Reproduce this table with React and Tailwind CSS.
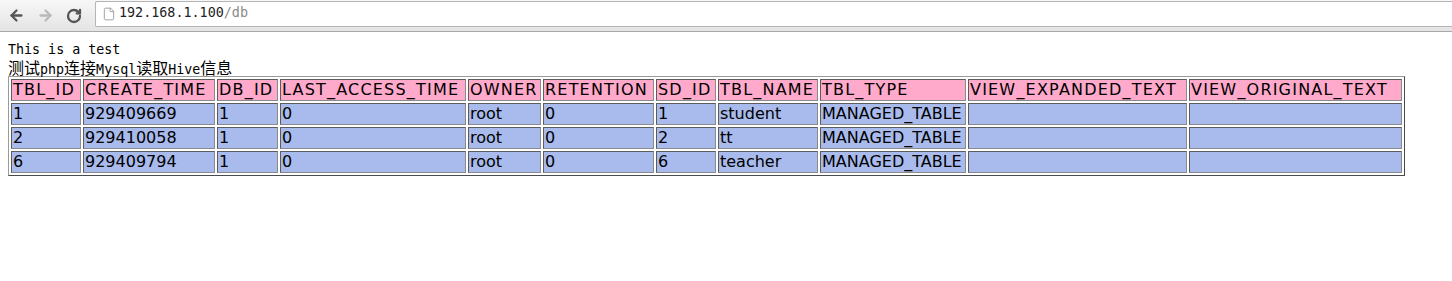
import { ArrowLeft, ArrowRight, RotateCw, File } from 'lucide-react';

const columns = [
  { name: 'TBL_ID', w: 'w-[70px]' },
  { name: 'CREATE_TIME', w: 'w-[132px]' },
  { name: 'DB_ID', w: 'w-[61px]' },
  { name: 'LAST_ACCESS_TIME', w: 'w-[186px]' },
  { name: 'OWNER', w: 'w-[73px]' },
  { name: 'RETENTION', w: 'w-[111px]' },
  { name: 'SD_ID', w: 'w-[60px]' },
  { name: 'TBL_NAME', w: 'w-[100px]' },
  { name: 'TBL_TYPE', w: 'w-[146px]' },
  { name: 'VIEW_EXPANDED_TEXT', w: 'w-[219px]' },
  { name: 'VIEW_ORIGINAL_TEXT', w: 'w-[213px]' },
];

const rows = [
  ['1', '929409669', '1', '0', 'root', '0', '1', 'student', 'MANAGED_TABLE', '', ''],
  ['2', '929410058', '1', '0', 'root', '0', '2', 'tt', 'MANAGED_TABLE', '', ''],
  ['6', '929409794', '1', '0', 'root', '0', '6', 'teacher', 'MANAGED_TABLE', '', ''],
];

const cell =
  'h-[22px] p-px border border-t-[#5c5c5c] border-l-[#5c5c5c] border-b-[#8a8a8a] border-r-[#8a8a8a] text-left font-normal whitespace-nowrap overflow-hidden leading-[18px]';

function Toolbar() {
  return (
    <div className="h-[32px] flex items-center bg-gradient-to-b from-[#f7f7f7] to-[#e4e4e4] border-b border-[#a9a9a9]">
      <div className="flex items-center gap-[12px] pl-[8px] w-[95px]">
        <ArrowLeft size={17} strokeWidth={3.2} className="text-[#555]" />
        <ArrowRight size={17} strokeWidth={3.2} className="text-[#b9b9b9]" />
        <RotateCw size={16} strokeWidth={3.4} className="text-[#555]" />
      </div>
      <div className="flex-1 h-[26px] mb-[4px] bg-white border border-[#b5b5b5] border-r-0 rounded-l-[2px] flex items-center pl-[6px] gap-[3px]">
        <File size={14} strokeWidth={1.3} className="text-[#888]" />
        <span className="font-['DejaVu_Sans_Mono',monospace] text-[13.4px] text-[#222]">
          192.168.1.100<span className="text-[#8a8a8a]">/db</span>
        </span>
      </div>
    </div>
  );
}

export default function App() {
  return (
    <div className="w-[1452px] h-[281px] bg-white overflow-hidden">
      <Toolbar />
      <div className="px-[8px] pt-[9px] text-black">
        <div className="font-['DejaVu_Sans_Mono','Liberation_Mono',monospace] text-[13.33px] leading-[17px]">
          This is a test
        </div>
        <div className="font-['DejaVu_Sans_Mono','Noto_Sans_CJK_SC',monospace] text-[13.33px] leading-[18px] h-[18px] whitespace-nowrap">
          <span className="font-['Noto_Sans_CJK_SC',sans-serif] text-[16px]">测试</span>php
          <span className="font-['Noto_Sans_CJK_SC',sans-serif] text-[16px]">连接</span>Mysql
          <span className="font-['Noto_Sans_CJK_SC',sans-serif] text-[16px]">读取</span>Hive
          <span className="font-['Noto_Sans_CJK_SC',sans-serif] text-[16px]">信息</span>
        </div>
        <table className="table-fixed border-separate border-spacing-[2px] border border-t-[#9a9a9a] border-l-[#9a9a9a] border-b-[#4a4a4a] border-r-[#4a4a4a] font-['DejaVu_Sans',sans-serif] text-[16px]">
          <thead>
            <tr>
              {columns.map(c => (
                <th key={c.name} className={`${cell} ${c.w} bg-[#ffa9cb] tracking-[1.2px]`}>
                  {c.name}
                </th>
              ))}
            </tr>
          </thead>
          <tbody>
            {rows.map((r, i) => (
              <tr key={i}>
                {r.map((v, j) => (
                  <td key={j} className={`${cell} bg-[#a9bbed]`}>
                    {v}
                  </td>
                ))}
              </tr>
            ))}
          </tbody>
        </table>
      </div>
    </div>
  );
}
